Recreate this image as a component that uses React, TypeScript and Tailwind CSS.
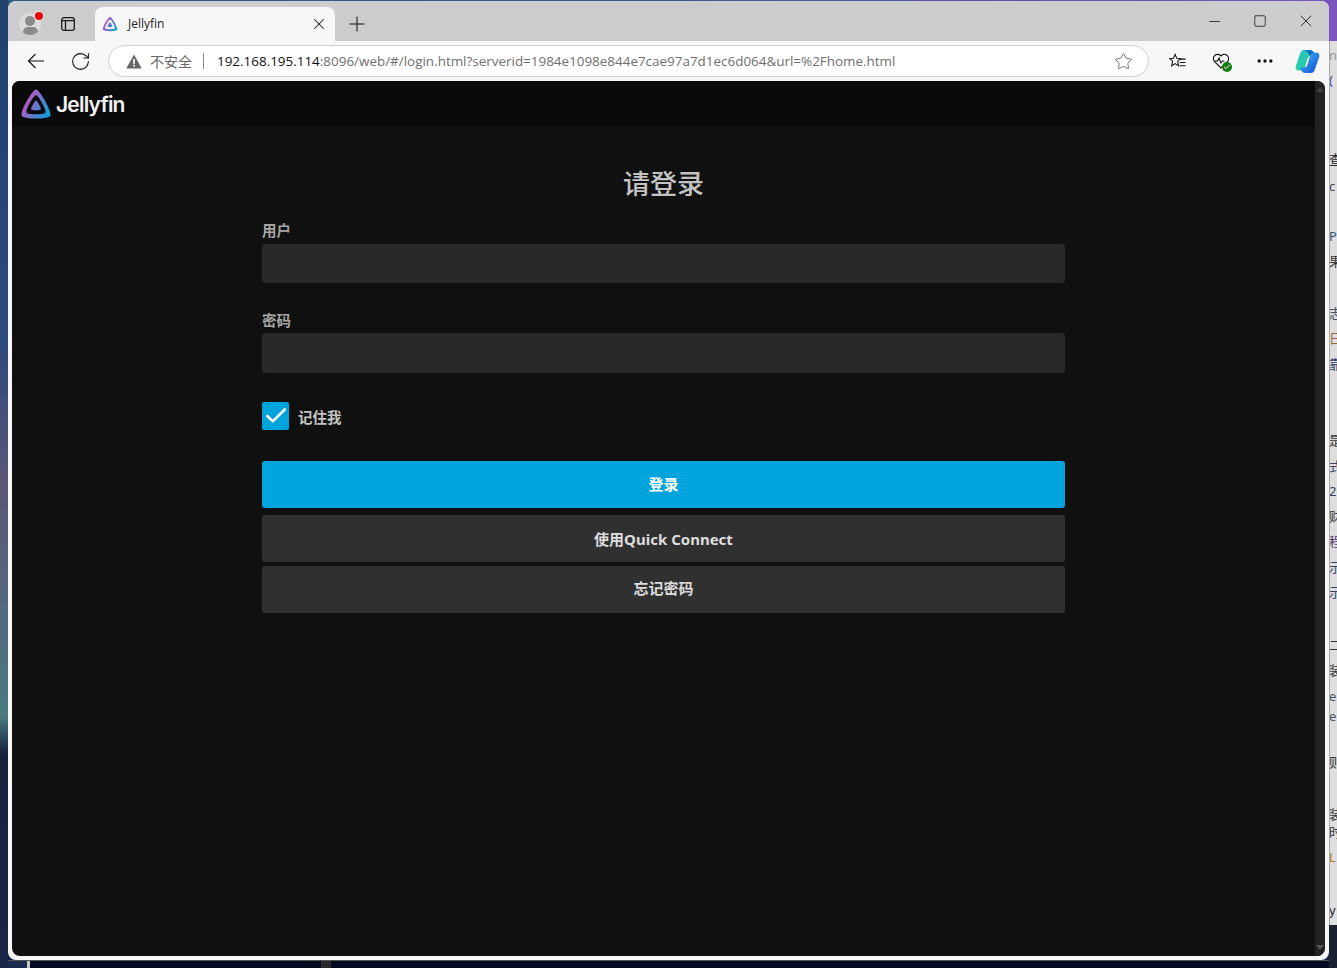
import { RotateCw, Star, Plus, X, Minus, Square, MoreHorizontal, Check } from "lucide-react";

function JellyfinLogo({ size, id }: { size: number; id: string }) {
  return (
    <svg width={size} height={size} viewBox="0 0 512 512">
      <defs>
        <linearGradient id={id} gradientUnits="userSpaceOnUse" x1="110" y1="220" x2="495" y2="440">
          <stop offset="0" stopColor="#AA5CC3" />
          <stop offset="1" stopColor="#00A4DC" />
        </linearGradient>
      </defs>
      <path fill={`url(#${id})`} d="M256 201.6c-20.4 0-86.2 119.3-76.2 139.4s142.5 19.9 152.4 0-55.7-139.4-76.2-139.4z" />
      <path fill={`url(#${id})`} d="M256 23.3c-61.6 0-259.8 359.4-229.6 420.1s429.3 60 459.2 0S317.6 23.3 256 23.3zm150.5 367.5c-19.6 39.3-281.1 39.8-300.9 0s110.1-275.3 150.4-275.3 170.1 235.9 150.5 275.3z" />
    </svg>
  );
}

function TabStrip() {
  return (
    <div className="flex h-10 bg-[#cccccc] rounded-t-lg">
      <div className="flex items-center w-[87px] pl-[11px] pt-[6px]">
        <div className="relative w-[22px] h-[22px]">
          <div className="w-[22px] h-[22px] rounded-full bg-[#dcdcdc] overflow-hidden flex flex-col items-center">
            <div className="w-[10px] h-[10px] rounded-full bg-[#8a8a8a] mt-[3px] shrink-0" />
            <div className="w-[15px] h-[10px] rounded-full bg-[#8a8a8a] mt-[1px] shrink-0" />
          </div>
          <div className="absolute -top-[1px] -right-[2px] w-[8px] h-[8px] rounded-full bg-[#ee0000] ring-1 ring-[#e8e8e8]" />
        </div>
        <svg className="ml-[19px]" width="16" height="16" viewBox="0 0 16 16" fill="none" stroke="#1a1a1a" strokeWidth="1.3">
          <rect x="1.7" y="1.7" width="12.6" height="12.6" rx="2.2" />
          <path d="M1.7 4.6h12.6M5.5 4.600v9.700" />
        </svg>
      </div>
      <div className="flex items-center w-[240px] h-[34px] mt-[6px] bg-[#f7f7f7] rounded-t-lg pl-[7px] pr-[7px]">
        <JellyfinLogo size={16} id="tab-logo" />
        <span className="ml-[10px] text-[12px] text-[#222222] flex-1 font-['Open_Sans',sans-serif]">Jellyfin</span>
        <X size={18} strokeWidth={1.4} className="text-[#222222]" />
      </div>
      <div className="flex items-center ml-[10px] pt-[6px]">
        <Plus size={24} strokeWidth={1} className="text-[#111111]" />
      </div>
      <div className="flex-1" />
      <div className="flex">
        <div className="w-[46px] flex items-center justify-center"><Minus size={17} strokeWidth={1.1} className="text-[#111111]" /></div>
        <div className="w-[46px] flex items-center justify-center"><Square size={14} strokeWidth={1.3} className="text-[#111111]" /></div>
        <div className="w-[46px] flex items-center justify-center"><X size={20} strokeWidth={1} className="text-[#111111]" /></div>
      </div>
    </div>
  );
}

function Toolbar() {
  return (
    <div className="flex items-center h-10 bg-[#f7f7f7]">
      <div className="flex items-center w-[100px] pl-[6px]">
        <div className="w-11 flex justify-center">
          <svg width="18" height="16" viewBox="0 0 18 16" fill="none" stroke="#111111" strokeWidth="1.1">
            <path d="M1.500 8H17M8.500 1 1.500 8l7 7" />
          </svg>
        </div>
        <div className="w-11 flex justify-center">
          <RotateCw size={21} strokeWidth={1.2} className="text-[#111111]" />
        </div>
      </div>
      <div className="flex items-center w-[1041px] h-8 bg-white border border-[#d0d0d0] rounded-full pl-[17px] pr-[15px]">
        <svg width="16" height="15" viewBox="0 0 16 15">
          <path d="M8 .5 15.7 14.5H.3z" fill="#666666" />
          <rect x="7.2" y="5" width="1.6" height="5.2" fill="#ffffff" />
          <rect x="7.2" y="11" width="1.6" height="1.7" fill="#ffffff" />
        </svg>
        <span className="ml-[8px] text-[14px] text-[#666666]">不安全</span>
        <span className="ml-[11px] w-px h-[16px] bg-[#888888]" />
        <span className="ml-[13px] text-[13.45px] whitespace-nowrap flex-1 text-[#6f6f6f] font-['Open_Sans',sans-serif]">
          <span className="text-[#111111]">192.168.195.114</span>:8096/web/#/login.html?serverid=1984e1098e844e7cae97a7d1ec6d064&amp;url=%2Fhome.html
        </span>
        <Star size={19} strokeWidth={1} className="text-[#555555]" />
      </div>
      <div className="flex items-center flex-1 pl-[6px]">
        <div className="w-11 flex justify-center">
          <svg width="17" height="17" viewBox="0 0 18 18" fill="none" stroke="#111111" strokeWidth="1.1">
            <path d="M6.500 1.500 8.200 5.600l4 .3-3 2.700 1 5-3.700-2.400-3.700 2.400 1-5L.8 5.900l4-.3z" />
            <path d="M11.500 6.500h6M11.500 10h6M11.500 13.500h6" />
          </svg>
        </div>
        <div className="w-11 flex justify-center">
          <div className="relative w-[18px] h-[18px]">
            <svg width="18" height="18" viewBox="0 0 18 18" fill="none" stroke="#111111" strokeWidth="1.1">
              <path d="M9 16 2.300 9.300A4 4 0 0 1 9 4a4 4 0 0 1 6.700 5.300L9 16z" />
              <path d="M2.500 9h3l1.500-3 2 5 1.500-2h2" />
            </svg>
            <div className="absolute -right-[2px] -bottom-[2px] w-[10px] h-[10px] rounded-full bg-[#107c10] flex items-center justify-center">
              <Check size={8} strokeWidth={3} className="text-white" />
            </div>
          </div>
        </div>
        <div className="w-11 flex justify-center">
          <MoreHorizontal size={20} strokeWidth={2} className="text-[#111111]" />
        </div>
        <svg className="ml-[8px]" width="25" height="25" viewBox="0 0 25 25">
          <defs>
            <linearGradient id="cop-a" x1="0" y1="0" x2="1" y2="1">
              <stop offset="0" stopColor="#22c3c8" />
              <stop offset="1" stopColor="#2fd08a" />
            </linearGradient>
            <linearGradient id="cop-b" x1="0" y1="0" x2="1" y2="1">
              <stop offset="0" stopColor="#3fc0f5" />
              <stop offset="1" stopColor="#1546d8" />
            </linearGradient>
            <linearGradient id="cop-c" x1="0" y1="0" x2="0" y2="1">
              <stop offset="0" stopColor="#0f7fd0" />
              <stop offset="1" stopColor="#10409f" />
            </linearGradient>
          </defs>
          <path d="M9 1h6c2 0 3.500 1.500 4 3l1 3h-4c-2 0-3 1-3.500 3L10 18c-.6 2.500-2 3.500-4 3.500H4C1.500 21.500 0 19.500.8 17L5 5c.7-2.500 2-4 4-4z" fill="url(#cop-a)" />
          <path d="M16 24H10c-2 0-3.500-1.500-4-3l-1-2.500h4c2 0 3-1 3.500-3L15 7c.6-2.500 2-3.500 4-3.500h2c2.500 0 4 2 3.200 4.500L20 20c-.7 2.500-2 4-4 4z" fill="url(#cop-b)" />
          <path d="M9 1h6c2 0 3.500 1.500 4 3 -2 0-3.500 1-4 3-1-3-3-4.500-6-6z" fill="url(#cop-c)" />
        </svg>
      </div>
    </div>
  );
}

function Field({ label, className, inputClass }: { label: string; className: string; inputClass: string }) {
  return (
    <div className={className}>
      <label className="block text-[14.5px] leading-[21px] font-semibold text-[#a8a8a8]">{label}</label>
      <input className={`block w-full bg-[#292929] rounded-[3px] outline-none ${inputClass}`} />
    </div>
  );
}

function LoginPage() {
  return (
    <div className="flex flex-1 min-h-0 rounded-b-lg rounded-t-lg overflow-hidden bg-[#101010]">
      <div className="flex-1 min-w-0 flex flex-col">
        <div className="flex items-center h-[45px] bg-[#0a0a0a] pl-[8px] shrink-0">
          <JellyfinLogo size={32} id="head-logo" />
          <span className="ml-[4px] mt-[3px] text-[21px] font-semibold text-[#f2f2f2] tracking-[-0.8px] font-['Inter',sans-serif]">Jellyfin</span>
        </div>
        <form className="w-[803px] mx-auto">
          <h1 className="text-[27px] leading-[38px] mt-[39px] text-center font-medium text-[#c4c4c4]">请登录</h1>
          <Field label="用户" className="mt-[17px]" inputClass="h-[39px] mt-[3px]" />
          <Field label="密码" className="mt-[27px]" inputClass="h-[40px] mt-[2px]" />
          <div className="flex items-center mt-[29px]">
            <div className="w-[27px] h-[28px] rounded-[2px] bg-[#00a4dc] flex items-center justify-center">
              <Check size={26} strokeWidth={2.4} className="text-white" />
            </div>
            <span className="ml-[9px] pt-[3px] text-[14.5px] font-semibold text-[#c4c4c4]">记住我</span>
          </div>
          <button type="button" className="block w-full h-[47px] mt-[31px] rounded-[3px] bg-[#00a4dc] text-white text-[15px] font-bold">登录</button>
          <button type="button" className="block w-full h-[47px] mt-[7px] pt-[2px] rounded-[3px] bg-[#303030] text-[#dddddd] text-[15px] font-bold">使用Quick Connect</button>
          <button type="button" className="block w-full h-[47px] mt-[4px] pb-[2px] rounded-[3px] bg-[#303030] text-[#dddddd] text-[15px] font-bold">忘记密码</button>
        </form>
      </div>
      <div className="w-[10px] bg-[#222222] flex flex-col items-center justify-between py-[6px] shrink-0">
        <div className="w-0 h-0 border-x-[4px] border-x-transparent border-b-[5px] border-b-[#444444]" />
        <div className="w-0 h-0 border-x-[4px] border-x-transparent border-t-[5px] border-t-[#555555]" />
      </div>
    </div>
  );
}

// bits of the window behind, cut by the screen edge: [top, text, colour]
const rightScraps: [number, string, string][] = [
  [48, "ne", "#999999"], [73, "(", "#334488"], [152, "查看", "#222222"], [179, "c", "#444444"],
  [229, "Pl", "#335577"], [254, "果", "#333333"], [306, "志", "#445566"], [331, "日", "#996633"],
  [357, "靠", "#334466"], [433, "是", "#333333"], [459, "式", "#334466"], [484, "2c", "#334466"],
  [509, "财", "#333333"], [534, "程", "#553366"], [560, "示", "#334466"], [585, "示", "#334466"],
  [638, "二", "#333333"], [663, "装", "#333333"], [689, "e", "#445566"], [709, "e", "#445566"],
  [755, "则", "#333333"], [807, "装", "#333333"], [825, "时", "#333333"], [850, "L", "#aa7722"],
  [903, "y", "#222222"],
];

export default function App() {
  return (
    <div className="flex h-[968px] w-[1337px] overflow-hidden font-['Noto_Sans','Noto_Sans_CJK_SC',sans-serif]">
      <div className="w-2 shrink-0 bg-[linear-gradient(to_bottom,#20406e_0%,#2c4a7c_35%,#5c5578_50%,#4a7a80_74%,#16203f_78%,#1b2748_100%)]" />
      <div className="flex flex-col w-[1321px] shrink-0 pt-px bg-[#16203f] bg-[linear-gradient(to_right,#2a5a80,#3a5a90_50%,#7a55c0)] bg-no-repeat bg-[length:100%_12px]">
        <div className="flex flex-col h-[959px] shrink-0 bg-[#f7f7f7] rounded-lg">
          <TabStrip />
          <Toolbar />
          <div className="flex flex-col flex-1 min-h-0 px-[4px] pb-[4px]">
            <LoginPage />
          </div>
        </div>
        <div className="flex h-2 border-t border-[#555555]">
          <div className="w-[19px] bg-[#1a2a50]" />
          <div className="w-[3px] bg-[#c8c8c8]" />
          <div className="w-[291px] bg-[#030a20]" />
          <div className="w-[10px] bg-[#2a2a2a]" />
          <div className="flex-1 bg-[#030a20]" />
        </div>
      </div>
      <div className="flex-1 flex flex-col">
        <div className="h-[41px] bg-[#7a55c0]" />
        <div className="relative flex-1 overflow-hidden bg-[#dedede] border-l border-[#a8a8a8]">
          {rightScraps.map(([top, text, color]) => (
            <span key={top} className="absolute -left-[1px] text-[13px] leading-[14px] whitespace-nowrap" style={{ top: top - 41, color }}>{text}</span>
          ))}
        </div>
        <div className="h-[43px] bg-[#1a2030]" />
      </div>
    </div>
  );
}
